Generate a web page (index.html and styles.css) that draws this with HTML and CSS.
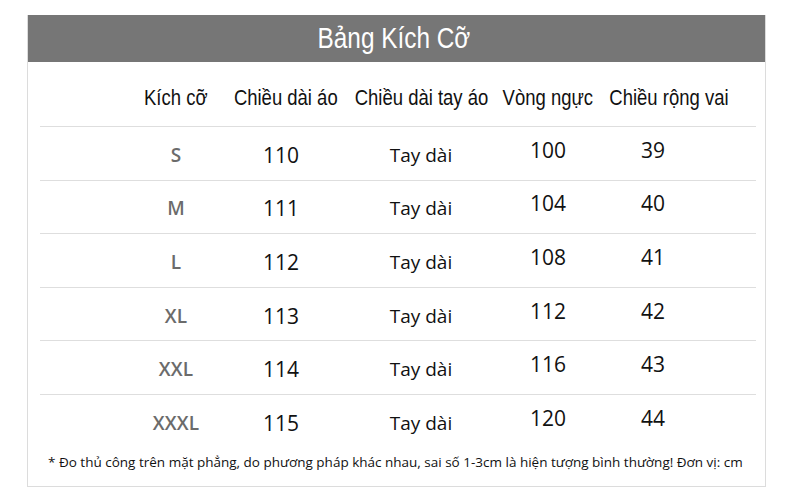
FILE: index.html
```html
<!DOCTYPE html>
<html lang="vi">
<head>
<meta charset="utf-8">
<title>Bảng Kích Cỡ</title>
<link rel="stylesheet" href="styles.css">
</head>
<body>
<div class="card">
  <div class="title"><span class="narrow">Bảng Kích Cỡ</span></div>
  <div class="table">
    <div class="row head">
      <div class="c1"><span class="narrow">Kích cỡ</span></div>
      <div class="c2"><span class="narrow">Chiều dài áo</span></div>
      <div class="c3"><span class="narrow">Chiều dài tay áo</span></div>
      <div class="c4"><span class="narrow">Vòng ngực</span></div>
      <div class="c5"><span class="narrow">Chiều rộng vai</span></div>
    </div>
    <div class="row body"><div class="c1 size">S</div><div class="c2 num">110</div><div class="c3 txt">Tay dài</div><div class="c4 num up">100</div><div class="c5 num up">39</div></div>
    <div class="row body"><div class="c1 size">M</div><div class="c2 num">111</div><div class="c3 txt">Tay dài</div><div class="c4 num up">104</div><div class="c5 num up">40</div></div>
    <div class="row body"><div class="c1 size">L</div><div class="c2 num">112</div><div class="c3 txt">Tay dài</div><div class="c4 num up">108</div><div class="c5 num up">41</div></div>
    <div class="row body"><div class="c1 size">XL</div><div class="c2 num">113</div><div class="c3 txt">Tay dài</div><div class="c4 num up">112</div><div class="c5 num up">42</div></div>
    <div class="row body"><div class="c1 size">XXL</div><div class="c2 num">114</div><div class="c3 txt">Tay dài</div><div class="c4 num up">116</div><div class="c5 num up">43</div></div>
    <div class="row body"><div class="c1 size">XXXL</div><div class="c2 num">115</div><div class="c3 txt">Tay dài</div><div class="c4 num up">120</div><div class="c5 num up">44</div></div>
  </div>
  <div class="note">* Đo thủ công trên mặt phẳng, do phương pháp khác nhau, sai số 1-3cm là hiện tượng bình thường! Đơn vị: cm</div>
</div>
</body>
</html>
```

FILE: styles.css
```css
* { box-sizing: border-box; }
html, body { margin: 0; padding: 0; background: #fff; }
body { width: 790px; height: 497px; overflow: hidden; }

.card {
  margin: 15px 0 0 27px;
  width: 739px;
  height: 472px;
  border: 1px solid #dcdcdc;
  border-top: none;
  background: #fff;
}

.narrow {
  display: inline-block;
  white-space: nowrap;
  transform: scaleX(0.84);
  transform-origin: center;
}

.title {
  height: 47px;
  background: #767676;
  color: #fff;
  font-family: "Liberation Sans", Arial, sans-serif;
  font-size: 29px;
  line-height: 47px;
  text-align: center;
  padding-right: 6px;
}

.table {
  padding: 0 9px 0 12px;
}

.row {
  display: grid;
  grid-template-columns: 80px 112px 108px 162px 92px 150px 1fr;
  align-items: center;
  text-align: center;
  white-space: nowrap;
}

.head {
  height: 64px;
  padding-top: 8px;
  font-family: "Liberation Sans", Arial, sans-serif;
  font-size: 22px;
  color: #111;
}
.head > div {
  display: flex;
  justify-content: center;
  min-width: 0;
}
.head .c1 { grid-column: 2; }
.head .c2 { grid-column: 3; }
.head .c3 { grid-column: 4; }
.head .c4 { grid-column: 5; }
.head .c5 { grid-column: 6; }

.body {
  height: 53.6px;
  border-top: 1px solid #dedede;
  padding-top: 3px;
}
.body .c1 { grid-column: 2; }
.body .c2 { grid-column: 3; padding-right: 10px; }
.body .c3 { grid-column: 4; }
.body .c4 { grid-column: 5; }
.body .c5 { grid-column: 6; padding-right: 32px; }

.size {
  font-family: "Open Sans", "Liberation Sans", sans-serif;
  font-size: 19px;
  font-weight: 600;
  color: #6b6b6b;
  letter-spacing: 0.2px;
}
.num {
  font-family: "Open Sans", "Liberation Sans", sans-serif;
  font-size: 21px;
  color: #111;
}
.txt {
  font-family: "Open Sans", "Liberation Sans", sans-serif;
  font-size: 19px;
  color: #111;
}
.up { position: relative; top: -5px; }

.note {
  font-family: "Open Sans", "Liberation Sans", sans-serif;
  font-size: 13.5px;
  color: #111;
  padding: 5px 0 0 20px;
  white-space: nowrap;
}
```
